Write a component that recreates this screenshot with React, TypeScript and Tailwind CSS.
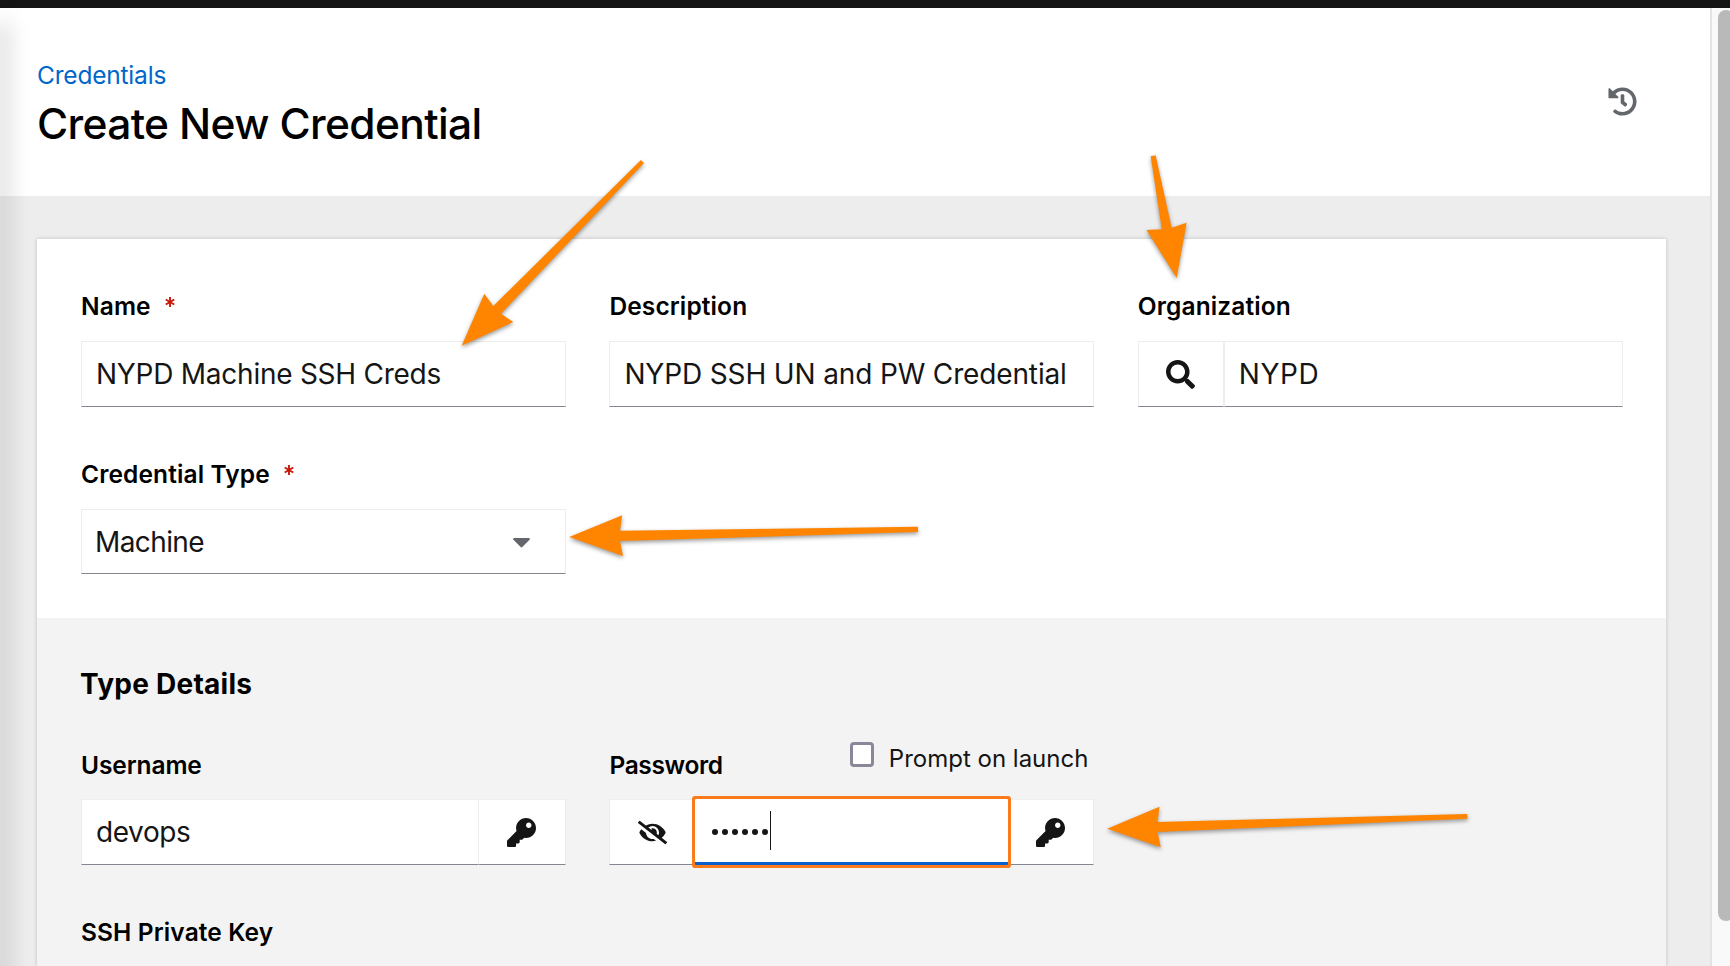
import type { ReactNode } from "react";
import { FaCaretDown, FaEyeSlash, FaHistory, FaKey, FaSearch } from "react-icons/fa";

function Label({ text, required, className }: { text: string; required?: boolean; className?: string }) {
  return (
    <div className={`flex h-9 text-[24.5px] leading-[37px] font-semibold text-black ${className ?? "tracking-[0.12px]"}`}>
      <span>{text}</span>
      {required && (
        <svg viewBox="0 0 10 10" className="mt-[9px] ml-[14px] h-[10px] w-[10px] shrink-0" aria-label="required">
          <path d="M5 0v10M0.7 2.5l8.6 5M9.3 2.5l-8.6 5" stroke="#c9190b" strokeWidth="1.9" fill="none" />
        </svg>
      )}
    </div>
  );
}

function Box({ className, children }: { className?: string; children?: ReactNode }) {
  return (
    <div
      className={`flex items-center border border-[#ededed] border-b-[#86858f] bg-white text-[28px] leading-none text-[#151515] ${className ?? ""}`}
    >
      {children}
    </div>
  );
}

type Point = [number, number];

const arrows: Point[][] = [
  [[461.7, 345.7], [484.3, 293.7], [493.3, 306], [641, 160], [644, 163], [501, 313.7], [513.3, 322]],
  [[1176.7, 278], [1146.5, 230], [1161.8, 229.3], [1150.7, 156.3], [1155.6, 155.3], [1171.7, 227.7], [1186.6, 222.7]],
  [[569.2, 537], [622.2, 515.3], [620, 530.7], [918, 526.7], [918, 532], [620, 541], [623, 556]],
  [[1107.2, 828.7], [1159.5, 806.7], [1157.5, 822], [1467.2, 814], [1467.6, 818.7], [1157.5, 832], [1160.7, 847.3]],
];

function Arrows() {
  return (
    <svg
      viewBox="0 0 1730 966"
      className="pointer-events-none absolute inset-0 z-20 h-[966px] w-[1730px] drop-shadow-[0_2px_2px_rgba(0,0,0,0.4)]"
    >
      {arrows.map((points, i) => (
        <polygon key={i} points={points.map((p) => p.join(",")).join(" ")} fill="#ff8400" />
      ))}
    </svg>
  );
}

export default function App() {
  return (
    <div className="relative flex h-[966px] w-[1730px] flex-col overflow-hidden bg-[#ededed] font-['Inter',sans-serif] text-[#151515]">
      <div className="relative z-10 h-2 shrink-0 bg-[#151515]" />

      <div className="flex min-h-0 grow">
        <main className="flex w-[1710px] flex-col">
          <header className="flex h-[188px] shrink-0 items-start justify-between bg-white pt-[49px] pr-[73px] pl-[37px]">
            <div>
              <a className="block text-[24.5px] leading-9 tracking-[-0.2px] text-[#0066cc]">Credentials</a>
              <h1 className="mt-[5px] text-[42.5px] leading-[52px] font-[550] tracking-[-0.65px] text-black">
                Create New Credential
              </h1>
            </div>
            <FaHistory className="mt-[30px] h-[29px] w-[29px] text-[#63666b]" />
          </header>

          <section className="mt-[43px] ml-[37px] flex w-[1629px] grow flex-col bg-white shadow-[0_0_4px_rgba(3,3,3,0.2)]">
            <div className="grid h-[379px] shrink-0 grid-cols-[485px_485px_485px] content-start gap-x-[43.4px] gap-y-[49px] px-11 pt-[49px]">
              <div>
                <Label text="Name" required />
                <Box className="mt-[17px] h-[66px] pl-[14px] tracking-[-0.25px]">NYPD Machine SSH Creds</Box>
              </div>
              <div>
                <Label text="Description" />
                <Box className="mt-[17px] h-[66px] pl-[14px] tracking-[-0.14px]">NYPD SSH UN and PW Credential</Box>
              </div>
              <div>
                <Label text="Organization" />
                <div className="mt-[17px] flex">
                  <Box className="h-[66px] w-[86px] justify-center">
                    <FaSearch className="h-[29px] w-[29px]" />
                  </Box>
                  <Box className="h-[66px] grow pl-[14px] tracking-[0.6px]">NYPD</Box>
                </div>
              </div>
              <div>
                <Label text="Credential Type" required />
                <Box className="mt-[17px] h-[65px] justify-between pr-[29px] pl-[13px] tracking-[-0.6px]">
                  <span>Machine</span>
                  <FaCaretDown className="h-[29px] w-[29px] text-[#63666b]" />
                </Box>
              </div>
            </div>

            <div className="grow bg-[#f3f3f3] px-11 pt-[46px]">
              <h2 className="-ml-px h-10 text-[28px] leading-10 font-bold tracking-[0.25px] text-black">Type Details</h2>
              <div className="mt-[43px] grid grid-cols-[485px_485px_485px] gap-x-[43.4px] gap-y-[49px]">
                <div>
                  <Label text="Username" className="tracking-[-0.1px]" />
                  <div className="mt-4 flex">
                    <Box className="h-[66px] grow border-r-0 pl-[14px] tracking-[-0.4px]">devops</Box>
                    <Box className="h-[66px] w-[88px] justify-center pr-[2px]">
                      <FaKey className="h-[29px] w-[29px]" />
                    </Box>
                  </div>
                </div>
                <div>
                  <div className="flex h-9 items-start justify-between">
                    <Label text="Password" className="tracking-[-0.35px]" />
                    <label className="-mt-[5px] mr-[6px] flex items-start gap-[15px]">
                      <span className="h-[25px] w-6 rounded-[4px] border-[3px] border-[#8a8799] bg-white" />
                      <span className="text-[24px] leading-[33px]">Prompt on launch</span>
                    </label>
                  </div>
                  <div className="mt-4 flex">
                    <Box className="h-[66px] w-[86px] justify-center">
                      <FaEyeSlash className="h-[29px] w-[29px]" />
                    </Box>
                    <div className="relative z-10 flex h-[66px] w-[313px] items-center rounded-[1px] border-b-[3px] border-[#0b5fcc] bg-white pl-[17px] ring-[3px] ring-[#f97b1c]">
                      <div className="mt-[3px] flex gap-[4px]">
                        {[0, 1, 2, 3, 4, 5].map((i) => (
                          <span key={i} className="h-[6px] w-[6px] rounded-full bg-[#151515]" />
                        ))}
                      </div>
                      <span className="ml-[2px] h-[39px] w-px bg-[#151515]" />
                    </div>
                    <Box className="h-[66px] grow justify-center border-l-0 pr-px">
                      <FaKey className="h-[29px] w-[29px]" />
                    </Box>
                  </div>
                </div>
                <div className="col-start-1">
                  <Label text="SSH Private Key" />
                </div>
              </div>
            </div>
          </section>
        </main>

        <aside className="w-5 border-l-2 border-[#e3e3e3] bg-[#f9f9f9] pt-[2px] pl-[6px]">
          <div className="h-[911px] w-4 rounded-full bg-[#b9b9b9]" />
        </aside>
      </div>

      <div className="pointer-events-none absolute top-2 -left-10 z-10 h-[1000px] w-10 shadow-[22px_0_22px_-15px_rgba(3,3,3,0.22)]" />
      <Arrows />
    </div>
  );
}
